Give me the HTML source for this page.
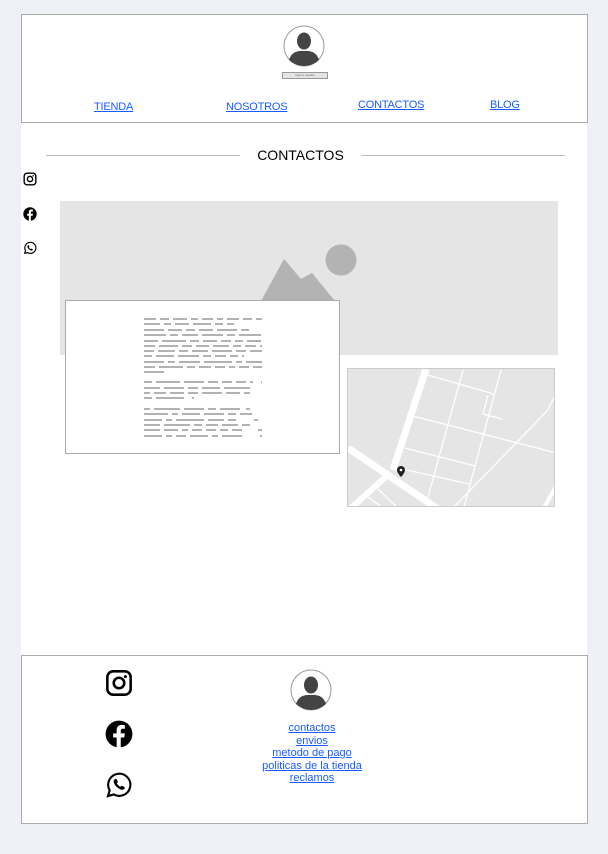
<!DOCTYPE html>
<html><head><meta charset="utf-8"><style>
*{margin:0;padding:0;box-sizing:border-box}
body{width:608px;height:854px;background:#edf0f5;position:relative;font-family:"Liberation Sans",sans-serif;overflow:hidden}
.abs{position:absolute}
a{color:#1a5cff;text-decoration:underline}
.main{left:21px;top:14px;width:566px;height:809px;background:#fff}
.hdr{left:21px;top:14px;width:567px;height:109px;border:1px solid #aaa;background:#fff}
.ftr{left:21px;top:655px;width:567px;height:169px;border:1px solid #aaa;background:#fff}
.nav{font-size:11px;letter-spacing:-0.2px}
.foot a{display:block;font-size:11px;line-height:12.5px;text-align:center}
</style></head><body>
<div class="abs main"></div>
<div class="abs hdr"></div>
<svg class="abs" style="left:283px;top:25px" width="42" height="42" viewBox="0 0 42 42"><circle cx="21" cy="21" r="20" fill="#fff" stroke="#999"/><ellipse cx="21" cy="16" rx="7" ry="8.5" fill="#444"/><path d="M6 35 Q9 25 21 26 Q33 25 36 35 Q29 41 21 41 Q13 41 6 35Z" fill="#444"/></svg>
<div class="abs" style="left:282px;top:72px;width:46px;height:7px;background:#e4e4e4;border:1px solid #999;font-size:3px;color:#666;text-align:center;line-height:5px">login o usuario</div>
<a class="abs nav" style="left:94px;top:101px">TIENDA</a>
<a class="abs nav" style="left:226px;top:101px">NOSOTROS</a>
<a class="abs nav" style="left:358px;top:99px">CONTACTOS</a>
<a class="abs nav" style="left:490px;top:99px">BLOG</a>
<div class="abs" style="left:46px;top:155px;width:194px;height:1px;background:#bbb"></div>
<div class="abs" style="left:361px;top:155px;width:204px;height:1px;background:#bbb"></div>
<div class="abs" style="left:240px;top:147px;width:121px;text-align:center;font-size:14px;color:#000">CONTACTOS</div>
<svg class="abs" style="left:23px;top:172px" width="14" height="14" viewBox="0 0 24 24"><rect x="2" y="2" width="20" height="20" rx="5" fill="none" stroke="#000" stroke-width="2.4"/><circle cx="12" cy="12" r="4.5" fill="none" stroke="#000" stroke-width="2.4"/><circle cx="17.5" cy="6.5" r="1.3"/></svg>
<svg class="abs" style="left:23px;top:207px" width="14" height="14" viewBox="0 0 24 24"><circle cx="12" cy="12" r="11.5"/><path d="M13.5 24V15h3l.5-3.5h-3.5V9.3c0-1 .4-1.8 1.8-1.8H17V4.4c-.4 0-1.5-.2-2.7-.2-2.7 0-4.3 1.6-4.3 4.6v2.7H7V15h3v9z" fill="#fff"/></svg>
<svg class="abs" style="left:23px;top:241px" width="14" height="14" viewBox="0 0 24 24"><path d="M3 21l1.3-4.6A9.5 9.5 0 1 1 7.8 20Z" fill="none" stroke="#000" stroke-width="2"/><path d="M8.5 7.5c.5-.5 1.2-.5 1.5 0l1 2c.2.5-.5 1-.8 1.4.6 1.3 1.6 2.3 3 3 .4-.3.9-1 1.4-.8l2 1c.5.3.4 1 0 1.5-1 1.200-2.5 1.2-4.5 0-2-1.2-3.5-2.8-4.3-4.6-.7-1.5-.5-2.7.7-3.5z"/></svg>
<div class="abs" style="left:60px;top:201px;width:498px;height:154px;background:#e5e5e5;overflow:hidden">
<svg width="498" height="154"><path d="M201 100 L224 58 L241 78 L252 72 L275 100Z" fill="#b3b3b3"/><circle cx="281" cy="59" r="15.5" fill="#b3b3b3"/></svg>
</div>
<div class="abs" style="left:65px;top:300px;width:275px;height:154px;background:#fff;border:1px solid #aaa"></div>
<svg class="abs" style="left:144px;top:318px" width="118" height="120" viewBox="0 0 118 120">
<g stroke="#999" stroke-width="1.6">
<path stroke-dasharray="12 4 9 4 14 4 7 4 11 4 6 4" d="M0 1H118"/>
<path stroke-dasharray="16 4 7 4 14 4 18 4 8 4" d="M0 6H90"/>
<path stroke-dasharray="20 4 14 4 9 4 14 4" d="M0 12H105"/>
<path stroke-dasharray="22 4 8 4 16 4 21 4 8 4" d="M0 17H118"/>
<path stroke-dasharray="14 4 24 4 9 4 14 4 10 4 8 4" d="M0 23H118"/>
<path stroke-dasharray="11 4 19 4 10 4 13 4 16 4 8 4" d="M0 28H118"/>
<path stroke-dasharray="10 4 17 4 9 4 16 4 20 4" d="M0 33H118"/>
<path stroke-dasharray="8 4 18 4 21 4 8 4 11 4" d="M0 38H100"/>
<path stroke-dasharray="20 4 7 4 21 4 28 4 6 4" d="M0 44H118"/>
<path stroke-dasharray="11 4 24 4 8 4 12 4 10 4 6 4 10 4" d="M0 49H118"/>
<path d="M0 54H20"/>
<path stroke-dasharray="8 4 24 4 20 4 10 4 10 4 10 4 3" d="M0 64H118"/>
<path stroke-dasharray="16 4 20 4 10 4 18 4 26" d="M0 70H118"/>
<path stroke-dasharray="6 4 12 4 14 4 10 4 20 4 14 4 6" d="M0 75H110"/>
<path stroke-dasharray="8 4 28" d="M0 80H50"/>
<path stroke-dasharray="6 4 26 4 20 4 8 4 20" d="M0 91H110"/>
<path stroke-dasharray="24 4 6 4 18 4 20 4 8 4 12" d="M0 96H118"/>
<path stroke-dasharray="18 4 6 4 28 4 16 4 8" d="M0 102H118"/>
<path stroke-dasharray="16 4 26 4 8 4 12 4 16 4 8" d="M0 107H118"/>
<path stroke-dasharray="16 4 14 4 6 4 10 4 10 4 8 4 10" d="M0 112H118"/>
<path stroke-dasharray="18 4 6 4 10 4 18 4 6 4 20" d="M0 118H118"/>
</g></svg>
<div class="abs" style="left:347px;top:368px;width:208px;height:139px;background:#e5e5e5;border:1px solid #ccc;overflow:hidden">
<svg width="208" height="139"><g stroke="#fff" fill="none" stroke-linecap="butt">
<path d="M78 0 L45 101" stroke-width="7"/>
<path d="M0 79 L90 140" stroke-width="7"/>
<path d="M42 104 L2 140" stroke-width="6"/>
<path d="M76 5 L146 25 M65 47 L208 84 M57 79 L127 97 M50 99 L121 115 M115 1 L80 128 M153 1 L116 138 M106 138 L199 42 L208 25 M140 26 L135 45 L154 50 M30 120 L50 139 M20 128 L35 139" stroke-width="1.3"/>
<path d="M196 139 L208 117" stroke-width="4"/>
</g><path d="M49 101a4 4 0 0 1 8 0c0 3-4 7-4 7s-4-4-4-7z" fill="#222"/><circle cx="53" cy="101" r="1.3" fill="#fff"/></svg>
</div>
<div class="abs ftr"></div>
<svg class="abs" style="left:105px;top:669px" width="28" height="28" viewBox="0 0 24 24"><rect x="2" y="2" width="20" height="20" rx="5" fill="none" stroke="#000" stroke-width="2.2"/><circle cx="12" cy="12" r="4.5" fill="none" stroke="#000" stroke-width="2.2"/><circle cx="17.5" cy="6.5" r="1.3"/></svg>
<svg class="abs" style="left:105px;top:720px" width="28" height="28" viewBox="0 0 24 24"><circle cx="12" cy="12" r="11.5"/><path d="M13.5 24V15h3l.5-3.5h-3.5V9.3c0-1 .4-1.8 1.8-1.8H17V4.4c-.4 0-1.5-.2-2.7-.2-2.7 0-4.3 1.6-4.3 4.6v2.7H7V15h3v9z" fill="#fff"/></svg>
<svg class="abs" style="left:105px;top:770px" width="28" height="29" viewBox="0 0 24 24"><path d="M2.5 22l1.5-5A9.5 9.5 0 1 1 7.5 20.5Z" fill="none" stroke="#000" stroke-width="1.8"/><path d="M8.5 7.5c.5-.5 1.2-.5 1.5 0l1 2c.2.5-.5 1-.8 1.4.6 1.3 1.6 2.3 3 3 .4-.3.9-1 1.4-.8l2 1c.5.3.4 1 0 1.5-1 1.2-2.5 1.2-4.5 0-2-1.2-3.5-2.8-4.3-4.6-.7-1.5-.5-2.7.7-3.5z"/></svg>
<svg class="abs" style="left:290px;top:669px" width="42" height="42" viewBox="0 0 42 42"><circle cx="21" cy="21" r="20" fill="#fff" stroke="#999"/><ellipse cx="21" cy="16" rx="7" ry="8.5" fill="#444"/><path d="M6 35 Q9 25 21 26 Q33 25 36 35 Q29 41 21 41 Q13 41 6 35Z" fill="#444"/></svg>
<div class="abs foot" style="left:252px;top:722px;width:120px">
<a>contactos</a><a>envios</a><a>metodo de pago</a><a>politicas de la tienda</a><a>reclamos</a>
</div>
</body></html>
